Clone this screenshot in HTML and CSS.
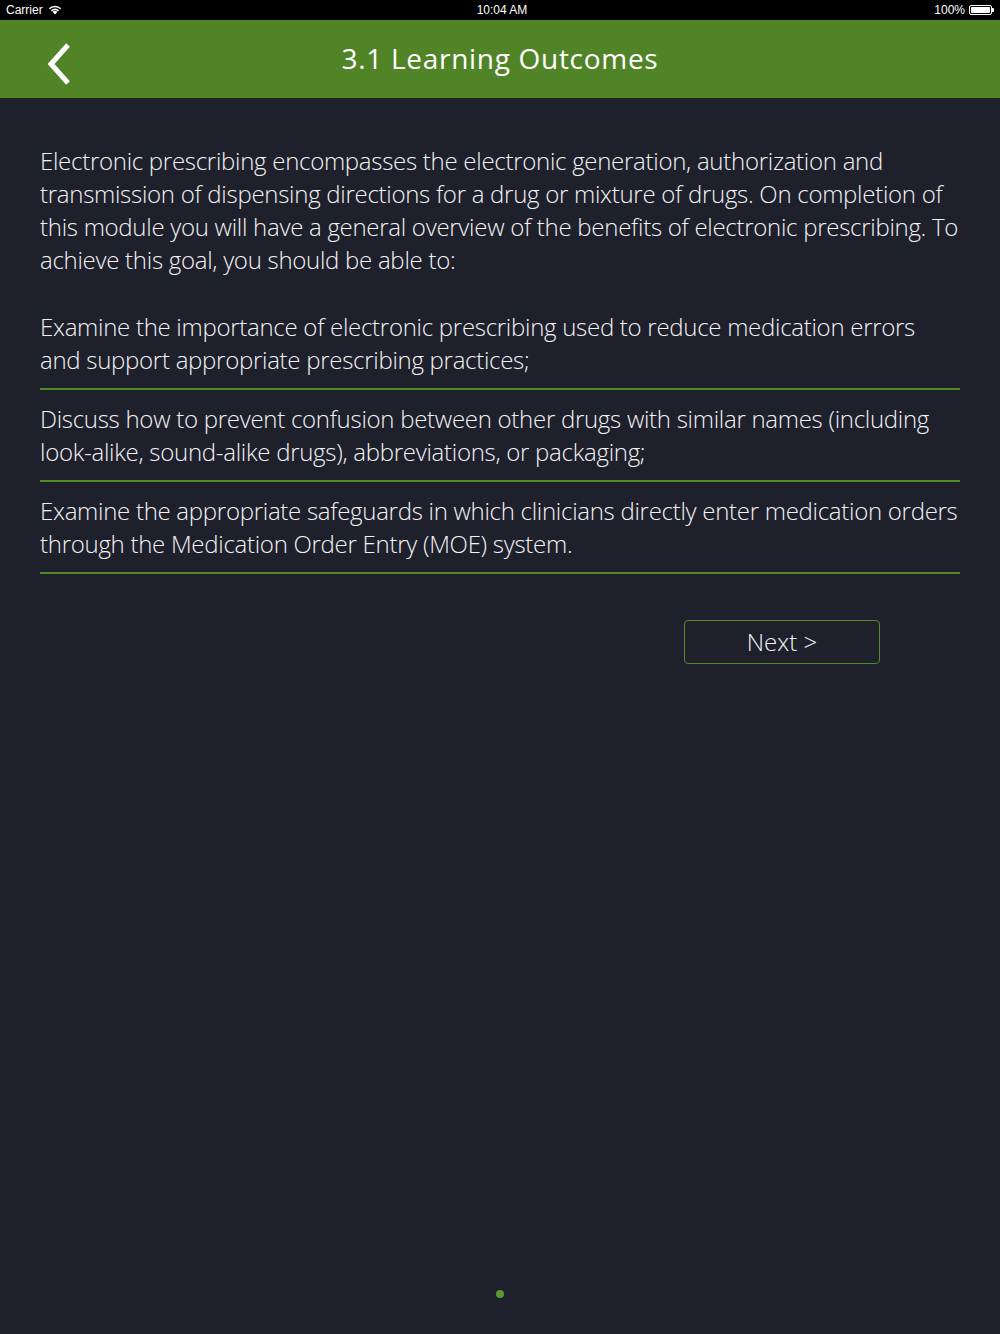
FILE: index.html
```html
<!DOCTYPE html>
<html>
<head>
<meta charset="utf-8">
<link rel="stylesheet" href="styles.css">
</head>
<body>
<div class="status">
  <div class="status-left">Carrier
    <svg class="wifi" width="14" height="10" viewBox="0 0 14 10"><path d="M7 9.5 L4.6 7 A3.4 3.4 0 0 1 9.4 7 Z" fill="#fff"/><path d="M2.9 5.3 A5.8 5.8 0 0 1 11.1 5.3 L10 6.4 A4.2 4.2 0 0 0 4 6.4 Z" fill="#fff"/><path d="M0.8 3.2 A8.8 8.8 0 0 1 13.2 3.2 L12.1 4.3 A7.3 7.3 0 0 0 1.9 4.3 Z" fill="#fff"/></svg>
  </div>
  <div class="status-time">10:04 AM</div>
  <div class="status-right">100%
    <span class="battery"><span class="battery-fill"></span></span><span class="battery-tip"></span>
  </div>
</div>
<header class="nav">
  <svg class="back" width="32" height="44" viewBox="0 0 32 44"><polyline points="24,3 7,22 24,41" fill="none" stroke="#fff" stroke-width="5"/></svg>
  <h1 class="title">3.1 Learning Outcomes</h1>
</header>
<main class="content">
  <p class="intro">Electronic prescribing encompasses the electronic generation, authorization and transmission of dispensing directions for a drug or mixture of drugs. On completion of this module you will have a general overview of the benefits of electronic prescribing. To achieve this goal, you should be able to:</p>
  <ul class="outcomes">
    <li>Examine the importance of electronic prescribing used to reduce medication errors and support appropriate prescribing practices;</li>
    <li>Discuss how to prevent confusion between other drugs with similar names (including look-alike, sound-alike drugs), abbreviations, or packaging;</li>
    <li>Examine the appropriate safeguards in which clinicians directly enter medication orders through the Medication Order Entry (MOE) system.</li>
  </ul>
  <div class="actions">
    <button class="next">Next &gt;</button>
  </div>
</main>
<div class="dot"></div>
</body>
</html>
```
FILE: styles.css
```css
html, body {
  margin: 0;
  padding: 0;
}
body {
  width: 1000px;
  height: 1334px;
  background: #1e202c;
  font-family: "Open Sans", sans-serif;
  position: relative;
  overflow: hidden;
}
.status {
  height: 20px;
  background: #000;
  color: #fff;
  font-family: "Liberation Sans", Arial, sans-serif;
  font-size: 12px;
  display: flex;
  align-items: center;
  justify-content: space-between;
  padding: 0 6px;
  position: relative;
}
.status-left {
  display: flex;
  align-items: center;
  gap: 5px;
}
.status-time {
  position: absolute;
  left: 4px;
  right: 0;
  text-align: center;
}
.status-right {
  display: flex;
  align-items: center;
}
.battery {
  margin-left: 4px;
  width: 23px;
  height: 10px;
  border: 1px solid #fff;
  border-radius: 2px;
  padding: 1px;
  box-sizing: border-box;
  display: inline-flex;
}
.battery-fill {
  flex: 1;
  background: #fff;
  border-radius: 1px;
}
.battery-tip {
  width: 2px;
  height: 4px;
  background: #fff;
  border-radius: 0 1px 1px 0;
}
.nav {
  height: 78px;
  background: #518427;
  display: flex;
  align-items: center;
  justify-content: center;
  position: relative;
}
.back {
  position: absolute;
  left: 44px;
  top: 42px;
  margin-top: -20px;
}
.title {
  margin: 0;
  color: #fff;
  font-weight: 400;
  font-size: 28px;
  letter-spacing: 0.7px;
  margin-top: -2px;
}
.content {
  padding: 0 40px;
  color: #f2f2f2;
  font-weight: 300;
  font-size: 24px;
  line-height: 33px;
  letter-spacing: -0.28px;
}
.intro {
  margin: 46px 0 34px;
}
.outcomes {
  list-style: none;
  margin: 0;
  padding: 0;
}
.outcomes li {
  padding: 0 0 12px;
  border-bottom: 2px solid #4f8a27;
  margin-bottom: 12px;
}
.actions {
  display: flex;
  justify-content: flex-end;
  padding-right: 80px;
  margin-top: 46px;
}
.next {
  width: 196px;
  height: 44px;
  background: transparent;
  border: 1px solid #528a2a;
  border-radius: 4px;
  color: #f2f2f2;
  font-family: "Open Sans", sans-serif;
  font-weight: 300;
  font-size: 24px;
  padding: 0;
  line-height: 42px;
}
.dot {
  position: absolute;
  left: 496px;
  top: 1290px;
  width: 8px;
  height: 8px;
  border-radius: 50%;
  background: #5a9a2e;
}
```
